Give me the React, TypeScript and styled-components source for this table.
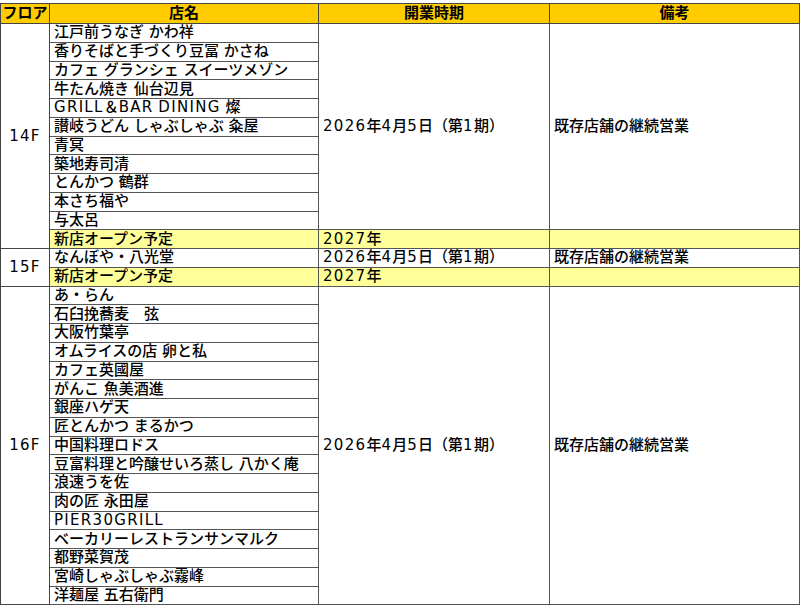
import React from 'react'
import styled, { createGlobalStyle } from 'styled-components'

const GlobalStyle = createGlobalStyle`
  html, body {
    margin: 0;
    padding: 0;
    background: #fff;
  }
  body {
    font-family: "DejaVu Sans", "Noto Sans CJK JP", sans-serif;
    color: #000;
  }
`

const Page = styled.div`
  padding-top: 3px;
`

const Table = styled.table`
  width: 799px;
  border-collapse: collapse;
  table-layout: fixed;
  font-size: 15px;
  line-height: 17px;
  font-weight: 500;
`

const HeadCell = styled.th`
  background: #ffcc00;
  border: 1px solid #454545;
  height: 19px;
  padding: 0;
  font-weight: bold;
  text-align: center;
  white-space: nowrap;
  overflow: hidden;
`

const Row = styled.tr`
  height: 18.75px;
`

const FloorCell = styled.td`
  border: 1px solid #454545;
  padding: 0;
  text-align: center;
  vertical-align: middle;
`

const Cell = styled.td<{ $hl?: boolean }>`
  border: 1px solid #555;
  padding: 0 0 0 4px;
  background: ${p => (p.$hl ? '#ffff99' : '#fff')};
  white-space: nowrap;
  overflow: hidden;
  vertical-align: middle;
`

// latin letters and digits run a little wider in the original
const Latin = styled.span`
  letter-spacing: 1.3px;
`

const Text = ({ children }: { children: string }) => {
  const parts = children.split(/([A-Za-z0-9]+)/)
  return (
    <>
      {parts.map((p, i) => (/^[A-Za-z0-9]+$/.test(p) ? <Latin key={i}>{p}</Latin> : p))}
    </>
  )
}

type Group = { shops: string[]; date: string; note: string; hl?: boolean }
type Floor = { floor: string; groups: Group[] }

const opening = '2026年4月5日（第1期）'
const keep = '既存店舗の継続営業'
const newShop: Group = { shops: ['新店オープン予定'], date: '2027年', note: '', hl: true }

const floors: Floor[] = [
  {
    floor: '14F',
    groups: [
      {
        shops: [
          '江戸前うなぎ かわ祥',
          '香りそばと手づくり豆冨 かさね',
          'カフェ グランシェ スイーツメゾン',
          '牛たん焼き 仙台辺見',
          'GRILL＆BAR DINING 燦',
          '讃岐うどん しゃぶしゃぶ 粂屋',
          '青冥',
          '築地寿司清',
          'とんかつ 鶴群',
          '本さち福や',
          '与太呂',
        ],
        date: opening,
        note: keep,
      },
      newShop,
    ],
  },
  {
    floor: '15F',
    groups: [{ shops: ['なんぼや・八光堂'], date: opening, note: keep }, newShop],
  },
  {
    floor: '16F',
    groups: [
      {
        shops: [
          'あ・らん',
          '石臼挽蕎麦　弦',
          '大阪竹葉亭',
          'オムライスの店 卵と私',
          'カフェ英國屋',
          'がんこ 魚美酒進',
          '銀座ハゲ天',
          '匠とんかつ まるかつ',
          '中国料理ロドス',
          '豆富料理と吟醸せいろ蒸し 八かく庵',
          '浪速うを佐',
          '肉の匠 永田屋',
          'PIER30GRILL',
          'ベーカリーレストランサンマルク',
          '都野菜賀茂',
          '宮崎しゃぶしゃぶ霧峰',
          '洋麺屋 五右衛門',
        ],
        date: opening,
        note: keep,
      },
    ],
  },
]

const App = () => {
  return (
    <Page>
      <GlobalStyle />
      <Table>
        <colgroup>
          <col style={{ width: 49 }} />
          <col style={{ width: 269 }} />
          <col style={{ width: 231 }} />
          <col style={{ width: 250 }} />
        </colgroup>
        <thead>
          <tr>
            <HeadCell>フロア</HeadCell>
            <HeadCell>店名</HeadCell>
            <HeadCell>開業時期</HeadCell>
            <HeadCell>備考</HeadCell>
          </tr>
        </thead>
        <tbody>
          {floors.map(f => {
            const total = f.groups.reduce((n, g) => n + g.shops.length, 0)
            let first = true
            return f.groups.map((g, gi) =>
              g.shops.map((shop, si) => {
                const showFloor = first
                first = false
                return (
                  <Row key={`${f.floor}-${gi}-${si}`}>
                    {showFloor && (
                      <FloorCell rowSpan={total}>
                        <Text>{f.floor}</Text>
                      </FloorCell>
                    )}
                    <Cell $hl={g.hl}>
                      <Text>{shop}</Text>
                    </Cell>
                    {si === 0 && (
                      <>
                        <Cell $hl={g.hl} rowSpan={g.shops.length}>
                          <Text>{g.date}</Text>
                        </Cell>
                        <Cell $hl={g.hl} rowSpan={g.shops.length}>
                          {g.note}
                        </Cell>
                      </>
                    )}
                  </Row>
                )
              })
            )
          })}
        </tbody>
      </Table>
    </Page>
  )
}

export default App
